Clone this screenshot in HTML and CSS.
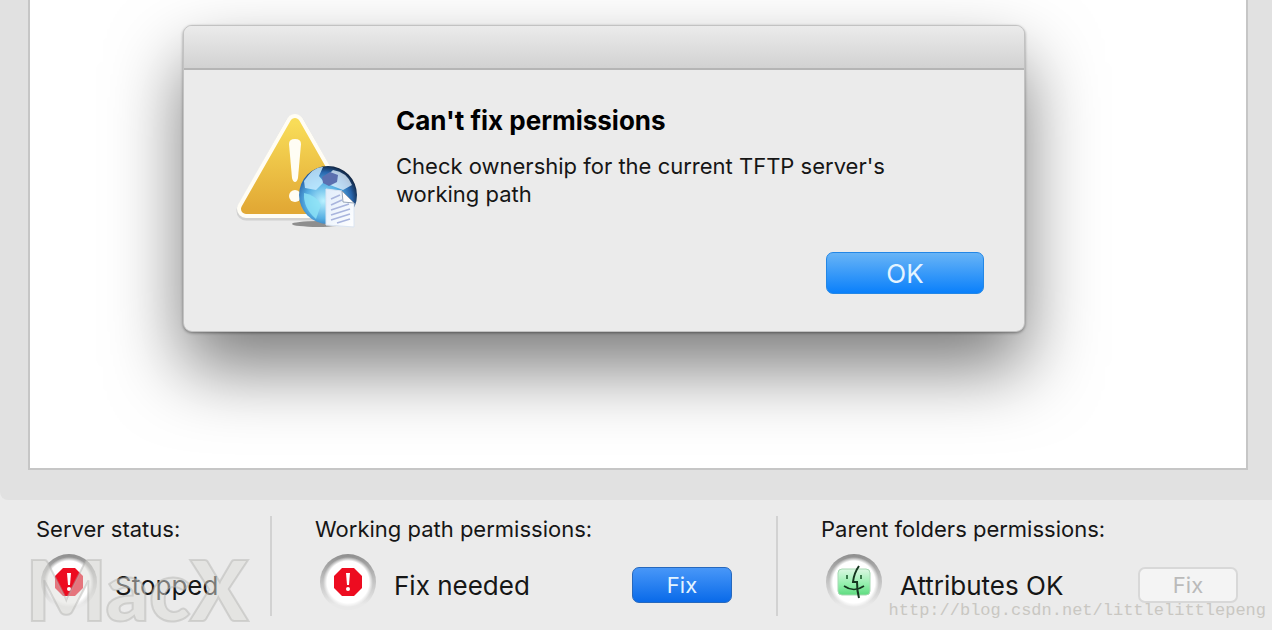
FILE: index.html
```
<!DOCTYPE html>
<html lang="en">
<head>
    <meta charset="utf-8">
    <title>TFTP Server</title>
    <link rel="stylesheet" href="styles.css">
</head>
<body>
    <main class="pane">
        <div class="log"></div>
    </main>

    <div class="dialog" role="alertdialog" aria-labelledby="dialog-title" aria-describedby="dialog-text">
        <div class="titlebar"></div>
        <div class="dialog-body">
            <svg class="warning" viewBox="0 0 124 120" aria-hidden="true">
                <defs>
                    <linearGradient id="gold" x1="0" y1="0" x2="0" y2="1">
                        <stop offset="0" stop-color="#f8dc58"/>
                        <stop offset="1" stop-color="#e2a935"/>
                    </linearGradient>
                    <radialGradient id="globe" cx="0.42" cy="0.6" r="0.62">
                        <stop offset="0" stop-color="#b9f1ff"/>
                        <stop offset="0.5" stop-color="#55aee2"/>
                        <stop offset="0.8" stop-color="#2865ac"/>
                        <stop offset="1" stop-color="#10233f"/>
                    </radialGradient>
                    <linearGradient id="paper" x1="0" y1="0" x2="1" y2="1">
                        <stop offset="0" stop-color="#e1edfb"/>
                        <stop offset="1" stop-color="#ffffff"/>
                    </linearGradient>
                </defs>
                <path d="M10 99 59 12 108 99Z" fill="#c0c0c0" stroke="#c0c0c0" stroke-width="19" stroke-linejoin="round" opacity="0.6"/>
                <path d="M10 97 59 11 108 97Z" fill="#fffdf5" stroke="#fffdf5" stroke-width="18" stroke-linejoin="round"/>
                <path d="M10 97 59 11 108 97Z" fill="url(#gold)" stroke="url(#gold)" stroke-width="10" stroke-linejoin="round"/>
                <path d="M53 32q0-5 6-5t6 5l-3 34q-1 4-3 4t-3-4Z" fill="#fffdf4"/>
                <circle cx="59" cy="84" r="6" fill="#fffdf4"/>
                <ellipse cx="82" cy="112" rx="26" ry="3" fill="#666" opacity="0.7"/>
                <circle cx="92" cy="83" r="29" fill="url(#globe)"/>
                <path d="M68 69q10-15 19-14l-4 9 5 6-8 8-11-2Z" fill="#c4eaff" opacity="0.85"/>
                <path d="M68 81q12 2 17 12l-5 14q-13-11-12-26Z" fill="#8de4f6" opacity="0.8"/>
                <path d="M97 58q14 2 19 15l-9 5-13-5-5-7Z" fill="#e6f4ff" opacity="0.75"/>
                <path d="m86 65 8-5 8 3-1 7-8 4-6-3Z" fill="#5b6faf"/>
                <path d="M90 77 106 79 118 91 118 115 90 113Z" fill="url(#paper)" stroke="#dbe5f2"/>
                <path d="m106 79 1 11 11 1Z" fill="#fff" stroke="#7f8fa5" stroke-width="0.8"/>
                <path d="m95 87 9-4M95 93l11-5M95 98l18-6M95 103l19-6M95 108l19-6M101 111l13-4" stroke="#a9b5dd" stroke-width="1.6"/>
            </svg>
            <div class="message">
                <h1 id="dialog-title">Can't fix permissions</h1>
                <p id="dialog-text">Check ownership for the current TFTP server's working path</p>
            </div>
            <button class="ok" type="button">OK</button>
        </div>
    </div>

    <footer class="status-bar">
        <section class="status">
            <h2>Server status:</h2>
            <div class="state">
                <span class="lamp">
                    <svg viewBox="0 0 28 28" aria-hidden="true">
                        <path d="M8 0h12l8 8v12l-8 8H8l-8-8V8Z" fill="#ed0c20"/>
                        <path d="M12 5h4l-1 12h-2Z" fill="#fff"/>
                        <circle cx="14" cy="21" r="2" fill="#fff"/>
                    </svg>
                </span>
                <span>Stopped</span>
            </div>
        </section>
        <section class="status status-path">
            <h2>Working path permissions:</h2>
            <div class="state">
                <span class="lamp">
                    <svg viewBox="0 0 28 28" aria-hidden="true">
                        <path d="M8 0h12l8 8v12l-8 8H8l-8-8V8Z" fill="#ed0c20"/>
                        <path d="M12 5h4l-1 12h-2Z" fill="#fff"/>
                        <circle cx="14" cy="21" r="2" fill="#fff"/>
                    </svg>
                </span>
                <span>Fix needed</span>
                <button class="fix" type="button">Fix</button>
            </div>
        </section>
        <section class="status status-parent">
            <h2>Parent folders permissions:</h2>
            <div class="state">
                <span class="lamp">
                    <svg class="finder" viewBox="0 0 34 34" aria-hidden="true">
                        <defs>
                            <linearGradient id="mint" x1="0" y1="0" x2="0" y2="1">
                                <stop offset="0" stop-color="#dcf8e3"/>
                                <stop offset="0.6" stop-color="#91efab"/>
                                <stop offset="1" stop-color="#5fdc80"/>
                            </linearGradient>
                        </defs>
                        <rect x="1" y="4" width="32" height="26" rx="4" fill="url(#mint)" stroke="#a6d9b3"/>
                        <path d="M22 1q-5 7-6 16h4q0 9 2 16" fill="none" stroke="#15351f" stroke-width="2"/>
                        <path d="M10 10v4M24 10v4" stroke="#397a4b" stroke-width="2"/>
                        <path d="M7 21q10 7 20 0" fill="none" stroke="#15351f" stroke-width="1.6"/>
                    </svg>
                </span>
                <span>Attributes OK</span>
                <button class="fix" type="button" disabled>Fix</button>
            </div>
        </section>
    </footer>

    <div class="watermark">MacX</div>
    <div class="source">http://blog.csdn.net/littlelittlepeng</div>
</body>
</html>
```

FILE: styles.css
```
* { box-sizing: border-box; }

body {
    position: relative;
    display: flex;
    flex-direction: column;
    min-height: 100vh;
    margin: 0;
    background: #ebebeb;
    color: #161616;
    font-family: Inter, "Liberation Sans", sans-serif;
}

h1, h2, p { margin: 0; }

button {
    padding: 0;
    font-family: inherit;
    color: #e4f4ff;
}

/* main pane */
.pane {
    flex: 1;
    display: flex;
    padding: 0 24px 30px 28px;
    background: #e1e1e1;
    border-radius: 0 0 0 8px;
}
.log {
    flex: 1;
    background: #fff;
    border: 2px solid #c6c6c6;
    border-top: 0;
}

/* alert, floats over the pane */
.dialog {
    position: absolute;
    top: 25px;
    left: 183px;
    width: 842px;
    border: 1px solid #c2c2c2;
    border-radius: 9px;
    background: #ebebeb;
    box-shadow: 0 1px 3px rgba(0, 0, 0, 0.4), 0 36px 72px rgba(0, 0, 0, 0.52);
}
.titlebar {
    height: 44px;
    border-bottom: 2px solid #b5b5b5;
    border-radius: 8px 8px 0 0;
    background: linear-gradient(#ebebeb, #d2d2d2);
}
.dialog-body {
    display: grid;
    grid-template-columns: 124px 1fr;
    column-gap: 36px;
    padding: 36px 40px 37px 52px;
}
.warning {
    width: 124px;
    height: 120px;
    margin-top: 6px;
    overflow: visible;
}
.message h1 {
    margin-bottom: 16px;
    font-size: 26px;
    line-height: 30px;
    color: #000;
}
.message p {
    max-width: 520px;
    font-size: 22px;
    line-height: 28px;
}
.ok {
    grid-column: 2;
    justify-self: end;
    width: 158px;
    height: 42px;
    margin-top: 20px;
    border: 1px solid #2387e6;
    border-radius: 7px;
    background: linear-gradient(#68b4f6, #0a80fb);
    font-size: 26px;
}

/* status bar */
.status-bar {
    display: grid;
    grid-template-columns: 272fr 506fr 494fr;
    padding: 16px 0 14px;
}
.status {
    padding: 0 34px 0 36px;
    border-right: 2px solid #d2d2d2;
}
.status-path { padding: 0 44px 0 43px; }
.status-parent {
    padding-left: 43px;
    border-right: 0;
}
.status h2 {
    margin-bottom: 12px;
    font-size: 22px;
    font-weight: 400;
    line-height: 26px;
}
.state {
    display: flex;
    align-items: center;
    gap: 18px;
    padding-left: 5px;
    font-size: 26px;
    white-space: nowrap;
}
.lamp {
    display: flex;
    align-items: center;
    justify-content: center;
    width: 56px;
    height: 56px;
    margin-bottom: 6px;
    border-radius: 50%;
    background:
        radial-gradient(circle, #fff 21px, transparent 25px),
        linear-gradient(#8e8e8e, #c4c4c4 50%, #e9e9e9 90%);
}
.lamp svg { width: 28px; height: 28px; }
.lamp .finder { width: 34px; height: 34px; }
.fix {
    width: 100px;
    height: 36px;
    margin-left: auto;
    border: 1px solid #2668bd;
    border-radius: 7px;
    background: linear-gradient(#4897f8, #096ae9);
    font-size: 22px;
}
.fix:disabled {
    border: 2px solid #d8d8d8;
    background: #f4f4f4;
    color: #bababa;
}

/* overlaid marks */
.watermark {
    position: absolute;
    bottom: 0;
    left: 26px;
    font: 800 84px/82px Lato, sans-serif;
    color: rgba(222, 221, 217, 0.5);
    -webkit-text-stroke: 2px rgba(170, 170, 168, 0.4);
    pointer-events: none;
}
.source {
    position: absolute;
    right: 6px;
    bottom: 8px;
    font: 17px/22px "Liberation Mono", monospace;
    color: #c9c7c2;
    pointer-events: none;
}
```
